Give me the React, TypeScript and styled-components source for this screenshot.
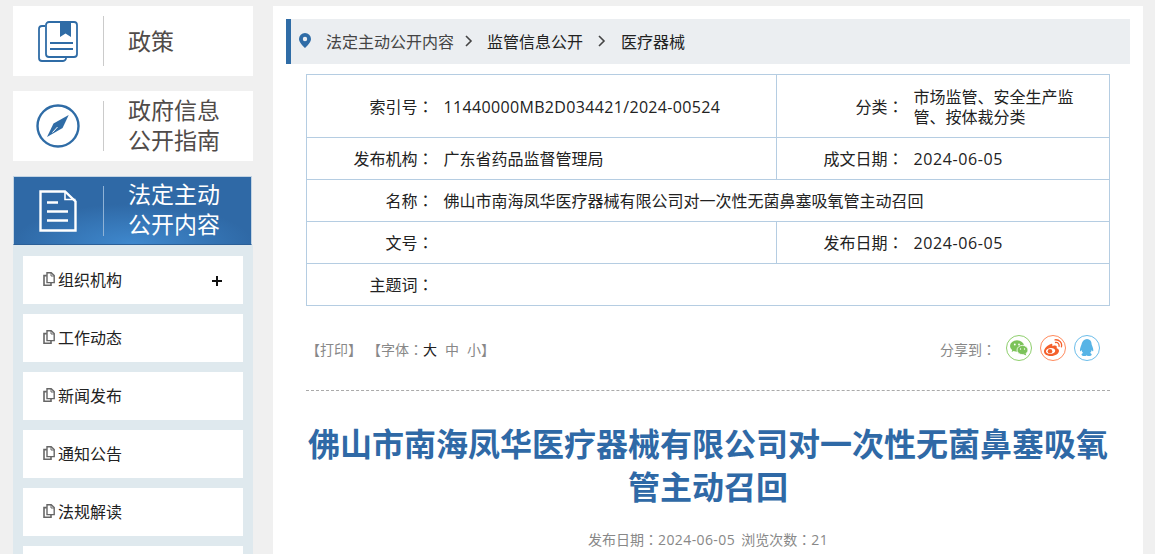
import React from "react";
import styled, { createGlobalStyle } from "styled-components";

const Global = createGlobalStyle`
  html, body { margin: 0; padding: 0; background: #f0f0f0; height: 554px; overflow: hidden; }
  body { font-family: "Noto Sans CJK SC", "Noto Sans", sans-serif; }
  #root { height: 554px; overflow: hidden; }
  * { box-sizing: border-box; }
`;

const Page = styled.div`
  display: flex;
  align-items: flex-start;
  gap: 20px;
  padding: 6px 0 0 13px;
  width: 1155px;
  height: 554px;
  overflow: hidden;
`;
const Side = styled.aside`
  width: 240px;
  flex: none;
  display: flex;
  flex-direction: column;
`;
const NavCard = styled.div<{ $mt?: number }>`
  display: flex;
  align-items: center;
  height: 70px;
  margin-top: ${(p) => p.$mt ?? 0}px;
  background: #fff;
  color: #504b49;
`;
const ActiveCard = styled.div`
  display: flex;
  align-items: center;
  height: 69px;
  width: 239px;
  margin-top: 15px;
  border: 1px solid #c3d4e3;
  border-bottom-color: #2b5f97;
  background: radial-gradient(ellipse 120px 40px at 50% 100%, #3f88cd 0%, #2f69a6 100%);
  color: #fff;
`;
const NavIcon = styled.div<{ $w?: number; $pr?: number }>`
  width: ${(p) => p.$w ?? 90}px;
  flex: none;
  display: flex;
  justify-content: center;
  align-items: center;
  padding-right: ${(p) => p.$pr ?? 0}px;
`;
const NavLabel = styled.div<{ $light?: boolean; $single?: boolean }>`
  height: 50px;
  flex: 1;
  display: flex;
  align-items: center;
  padding: 0 0 ${(p) => (p.$single ? 2 : 5)}px 24px;
  border-left: 1px solid ${(p) => (p.$light ? "#8fb2d6" : "#cbcbcb")};
  font-size: 23px;
  line-height: 30px;
`;
const SubPanel = styled.div`
  background: #dfe9ee;
  padding: 11px 10px 0;
  display: flex;
  flex-direction: column;
  gap: 10px;
  height: 320px;
`;
const SubItem = styled.div`
  flex: none;
  height: 48px;
  background: #fff;
  display: flex;
  align-items: center;
  padding: 0 20px 2px;
  font-size: 16px;
  color: #222;
  gap: 3px;
`;
const Plus = styled.span`
  margin-left: auto;
  margin-right: 1px;
  width: 10px;
  height: 10px;
  position: relative;
  top: 2px;
  &::before, &::after { content: ""; position: absolute; background: #111; }
  &::before { left: 0; right: 0; top: 4px; height: 2px; }
  &::after { top: 0; bottom: 0; left: 4px; width: 2px; }
`;
const Main = styled.main`
  width: 870px;
  flex: none;
  height: 560px;
  background: #fff;
  padding: 13px 13px 0;
`;
const Crumbs = styled.div`
  height: 45px;
  background: #ebeef1;
  border-left: 5px solid #2f6ca6;
  display: flex;
  align-items: center;
  padding: 0 0 2px 8px;
  font-size: 16px;
  color: #222;
`;
const Crumb = styled.span<{ $muted?: boolean; $ml?: number }>`
  color: ${(p) => (p.$muted ? "#444" : "#222")};
  margin-left: ${(p) => p.$ml ?? 0}px;
`;
const Chev = styled.svg<{ $ml: number }>`
  margin-left: ${(p) => p.$ml}px;
  flex: none;
`;
const Body = styled.div`
  padding: 10px 20px 0;
`;
const Meta = styled.table`
  width: 804px;
  border-collapse: collapse;
  table-layout: fixed;
  font-size: 16px;
  color: #222;
  td { border: 1px solid #b5cde2; padding: 0; }
  tr { height: 42px; }
  tr:first-child { height: 63px; }
  tr:not(:first-child) td { padding-bottom: 2px; }
`;
const Label = styled.td`
  text-align: right;
  padding-right: 4px !important;
  border-right: none !important;
`;
const Value = styled.td<{ $pr?: number }>`
  padding-left: 6px !important;
  padding-right: ${(p) => p.$pr ?? 0}px !important;
  line-height: 20px;
  border-left: none !important;
`;
const Colon = styled.span`
  font-family: "Noto Sans CJK TC", sans-serif;
`;
const Num = styled.span<{ $ls?: number; $dy?: number }>`
  font-family: "Open Sans", sans-serif;
  letter-spacing: ${(p) => p.$ls ?? 0.3}px;
  position: relative;
  top: ${(p) => p.$dy ?? 0}px;
`;
const Tools = styled.div`
  height: 85px;
  display: flex;
  align-items: center;
  justify-content: space-between;
  border-bottom: 1px dashed #aaa;
  font-size: 14px;
  color: #888;
`;
const ToolLeft = styled.div`
  display: flex;
  gap: 5px;
  margin-top: 2px;
`;
const Size = styled.span<{ $dark?: boolean; $ml?: number }>`
  color: ${(p) => (p.$dark ? "#222" : "#888")};
  margin-left: ${(p) => p.$ml ?? 0}px;
`;
const Share = styled.div`
  display: flex;
  align-items: center;
  gap: 8px;
  margin-right: 10px;
`;
const ShareText = styled.span`
  margin: 2px 2px 0 0;
`;
const Circle = styled.div<{ $c: string }>`
  width: 26px;
  height: 26px;
  border-radius: 50%;
  border: 1px solid ${(p) => p.$c};
  display: flex;
  align-items: center;
  justify-content: center;
`;
const Title = styled.h1`
  margin: 30px 0 0;
  text-align: center;
  font-size: 32px;
  line-height: 43px;
  font-weight: 700;
  color: #2f69a6;
`;
const Info = styled.div`
  margin-top: 22px;
  text-align: center;
  font-size: 14px;
  color: #888;
`;

const DocMini = () => (
  <svg width="12" height="14" viewBox="0 0 12 14" fill="none" stroke="#666" strokeWidth="1.4">
    <path d="M4 .8h4.2L11.2 3.600v7H4z" />
    <path d="M8 1v3h3" strokeWidth="1" />
    <path d="M3.800 3.600H1v9.600h7v-2.600" strokeWidth="1.600" />
  </svg>
);

const Chevron = ({ ml }: { ml: number }) => (
  <Chev $ml={ml} width="8" height="12" viewBox="0 0 8 12" fill="none" stroke="#444" strokeWidth="1.6">
    <path d="M1 1l5 5-5 5" />
  </Chev>
);

const items = ["组织机构", "工作动态", "新闻发布", "通知公告", "法规解读"];

export default function App() {
  return (
    <>
      <Global />
      <Page>
        <Side>
          <NavCard>
            <NavIcon>
              <svg width="40" height="41" viewBox="0 0 40 41" fill="none" stroke="#2f6ca6" strokeWidth="1.800">
                <path d="M7 5H4a3 3 0 0 0-3 3v29a3 3 0 0 0 3 3h21a3 3 0 0 0 3-3.500" />
                <rect x="8" y="1" width="31" height="35" rx="3" />
                <path d="M22 0h11v16l-5.500-3.500L22 16z" fill="#2f6ca6" stroke="none" />
                <path d="M12 22h23M12 28h23" />
              </svg>
            </NavIcon>
            <NavLabel $single>政策</NavLabel>
          </NavCard>
          <NavCard $mt={15}>
            <NavIcon>
              <svg width="44" height="44" viewBox="0 0 44 44" fill="none">
                <circle cx="22" cy="22" r="20.500" stroke="#2f6ca6" strokeWidth="2.400" />
                <path d="M32.700 11L26.600 24 11 33 17.500 19.500z" fill="#2f6ca6" />
                <path d="M16.500 28.500L21.500 23" stroke="#fff" strokeWidth="1" />
              </svg>
            </NavIcon>
            <NavLabel>政府信息<br />公开指南</NavLabel>
          </NavCard>
          <ActiveCard>
            <NavIcon $w={89} $pr={2}>
              <svg width="38" height="42" viewBox="0 0 38 42" fill="none" stroke="#fff" strokeWidth="2.400">
                <path d="M1.500 1.500H26L36.500 11.500V40.500H1.500z" />
                <path d="M26 1.500V9.500H36.500" strokeWidth="1.600" />
                <path d="M8 12.500h11M8 21.500h21M8 30.500h21" />
              </svg>
            </NavIcon>
            <NavLabel $light>法定主动<br />公开内容</NavLabel>
          </ActiveCard>
          <SubPanel>
            {items.map((t, i) => (
              <SubItem key={t}>
                <DocMini />
                <span>{t}</span>
                {i === 0 && <Plus />}
              </SubItem>
            ))}
            <SubItem />
          </SubPanel>
        </Side>
        <Main>
          <Crumbs>
            <svg width="12" height="15" viewBox="0 0 12 15">
              <path fillRule="evenodd" d="M6 0a6 6 0 0 1 6 6c0 3.500-4 7-6 9-2-2-6-5.500-6-9a6 6 0 0 1 6-6zm0 3.800a2.200 2.200 0 1 0 0 4.400 2.200 2.200 0 0 0 0-4.400z" fill="#2f6ca6" />
            </svg>
            <Crumb $muted $ml={15}>法定主动公开内容</Crumb>
            <Chevron ml={11} />
            <Crumb $ml={14}>监管信息公开</Crumb>
            <Chevron ml={15} />
            <Crumb $ml={15}>医疗器械</Crumb>
          </Crumbs>
          <Body>
            <Meta>
              <colgroup>
                <col style={{ width: 131 }} />
                <col style={{ width: 339 }} />
                <col style={{ width: 131 }} />
                <col />
              </colgroup>
              <tbody>
                <tr>
                  <Label>索引号<Colon>：</Colon></Label>
                  <Value><Num $ls={0.34}>11440000MB2D034421/2024-00524</Num></Value>
                  <Label>分类<Colon>：</Colon></Label>
                  <Value $pr={30}>市场监管、安全生产监管、按体裁分类</Value>
                </tr>
                <tr>
                  <Label>发布机构<Colon>：</Colon></Label>
                  <Value>广东省药品监督管理局</Value>
                  <Label>成文日期<Colon>：</Colon></Label>
                  <Value><Num $ls={0.6} $dy={1}>2024-06-05</Num></Value>
                </tr>
                <tr>
                  <Label>名称<Colon>：</Colon></Label>
                  <Value colSpan={3}>佛山市南海凤华医疗器械有限公司对一次性无菌鼻塞吸氧管主动召回</Value>
                </tr>
                <tr>
                  <Label>文号<Colon>：</Colon></Label>
                  <Value />
                  <Label>发布日期<Colon>：</Colon></Label>
                  <Value><Num $ls={0.6} $dy={1}>2024-06-05</Num></Value>
                </tr>
                <tr>
                  <Label>主题词<Colon>：</Colon></Label>
                  <Value colSpan={3} />
                </tr>
              </tbody>
            </Meta>
            <Tools>
              <ToolLeft>
                <span>【打印】</span>
                <span>
                  【字体<Colon>：</Colon><Size $dark>大</Size><Size $ml={8}>中</Size><Size $ml={8}>小</Size>】
                </span>
              </ToolLeft>
              <Share>
                <ShareText>分享到<Colon>：</Colon></ShareText>
                <Circle $c="#8fcf6d">
                  <svg width="18" height="16" viewBox="0 0 18 16">
                    <ellipse cx="7" cy="6" rx="7" ry="5.800" fill="#7cc35a" />
                    <path d="M2.500 9l-.8 3 3-1.500z" fill="#7cc35a" />
                    <ellipse cx="12.500" cy="10" rx="5.500" ry="4.600" fill="#7cc35a" stroke="#fff" strokeWidth=".8" />
                    <path d="M15.500 13l.8 2.500-3-1.200z" fill="#7cc35a" />
                    <circle cx="4.800" cy="4.500" r=".9" fill="#fff" /><circle cx="9" cy="4.500" r=".9" fill="#fff" />
                    <circle cx="10.500" cy="9" r=".7" fill="#fff" /><circle cx="14.500" cy="9" r=".7" fill="#fff" />
                  </svg>
                </Circle>
                <Circle $c="#ff8a5c">
                  <svg width="20" height="18" viewBox="0 0 20 18" fill="none">
                    <path fillRule="evenodd" d="M8 5C4.500 6 1 9.500 1 12.500 1 15.500 4.500 17 8 17c4.500 0 8-2.500 8-5.300 0-1.700-1.600-2.200-2.400-2.500.5-1.300.3-2.700-1.800-2.700-1 0-2 .5-2.500.8.400-1.500 0-3-1.300-2.300zM7.500 9c-2.800.2-4.700 1.800-4.500 3.500.2 1.500 2.200 2.600 4.800 2.400 2.700-.3 4.600-1.800 4.400-3.500-.2-1.600-2-2.600-4.700-2.400z" fill="#f4602c" />
                    <circle cx="7" cy="12.300" r="2.300" fill="#f4602c" />
                    <path d="M12.500 3.500c2.300-.3 4 1.500 3.500 3.800M12 .8c4.300-.5 7.500 3 6.400 7" stroke="#f4602c" strokeWidth="1.300" strokeLinecap="round" />
                  </svg>
                </Circle>
                <Circle $c="#6cbdea">
                  <svg width="14" height="18" viewBox="0 0 14 18">
                    <path d="M7 0c3 0 4.500 2.200 4.600 5 .1 1 .5 1.500 1 3 .8 2.200.9 4 .4 4.300-.4.200-.9-.5-1.300-1.200-.2 1.200-.8 2.200-1.600 2.900 1 .4 1.700 1 1.600 1.800-.2 1-2 1.400-3.400 1.200-.6-.1-1-.3-1.300-.6-.3 0-.5 0-.8 0-.3.300-.7.500-1.300.6C3.500 17.200 1.700 16.800 1.500 15.800c-.1-.8.600-1.400 1.600-1.800-.8-.7-1.400-1.700-1.600-2.900-.4.700-.9 1.400-1.300 1.200-.5-.3-.4-2.100.4-4.300.5-1.500.9-2 1-3C2.500 2.200 4 0 7 0z" fill="#57b4e6" />
                  </svg>
                </Circle>
              </Share>
            </Tools>
            <Title>佛山市南海凤华医疗器械有限公司对一次性无菌鼻塞吸氧管主动召回</Title>
            <Info>发布日期<Colon>：</Colon><Num $ls={0.4}>2024-06-05</Num>&nbsp;&nbsp;浏览次数<Colon>：</Colon><Num>21</Num></Info>
          </Body>
        </Main>
      </Page>
    </>
  );
}
